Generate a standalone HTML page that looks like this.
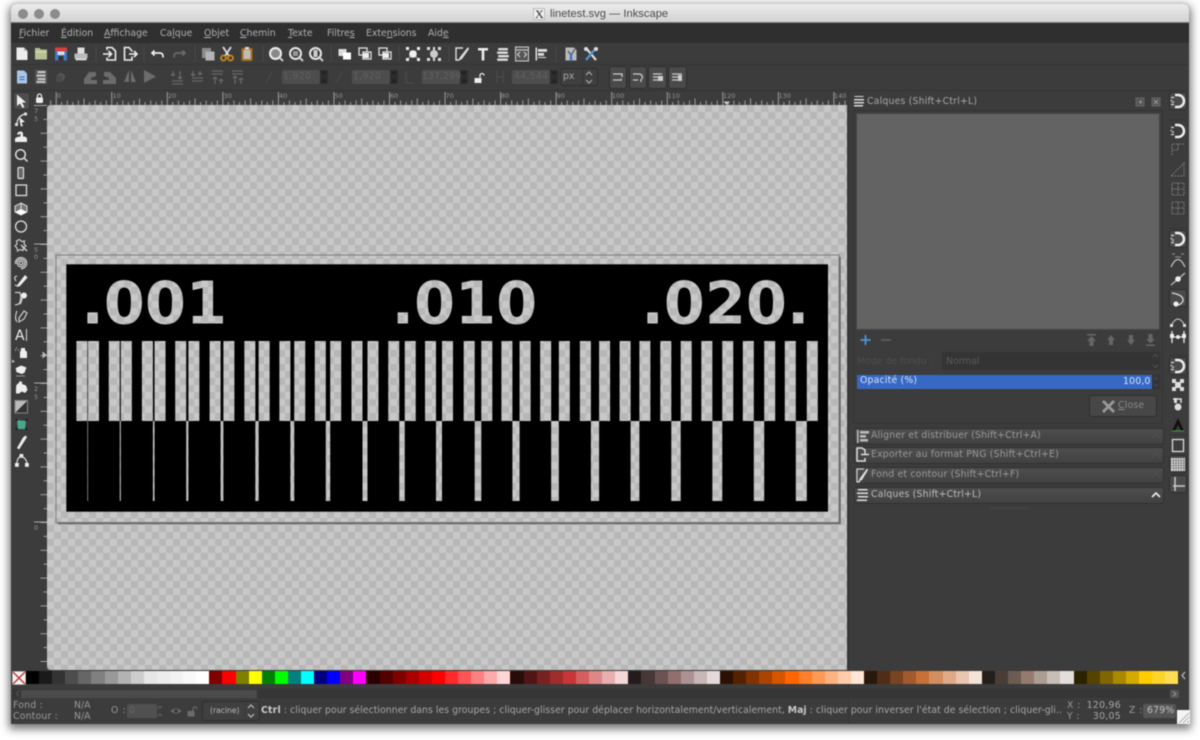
<!DOCTYPE html>
<html><head><meta charset="utf-8"><title>linetest.svg — Inkscape</title>
<style>
html,body{margin:0;padding:0;width:1200px;height:740px;overflow:hidden;background:#fff}
#r{position:relative;width:1200px;height:740px;filter:blur(.45px);font-family:"DejaVu Sans","Liberation Sans",sans-serif}
#r div,#r span.t,#r svg{position:absolute}
#win{left:11px;top:4px;width:1178px;height:720px;background:#3c3c3c;border-radius:5px 5px 0 0;box-shadow:0 3px 9px 2px rgba(0,0,0,.55)}
.t{line-height:12px;white-space:nowrap;font-size:9.3px;color:#b0b0b0}
.t u{text-underline-offset:1px}
.f{background:#525252;border-radius:2px}
.b{background:#464646;border:1px solid #2e2e2e;border-radius:3px;box-sizing:border-box}
.e{left:854px;width:310px;height:17px;background:linear-gradient(#4e4e4e,#414141);border:1px solid #303030;border-radius:3px;box-sizing:border-box}
#sw{left:26px;top:671px;width:1152px;height:13px;display:flex}
#sw i{flex:1;display:block}
</style></head><body><div id="r">
<div id="win"></div>
<div style="left:11px;top:4px;width:1178px;height:19px;background:linear-gradient(#ececec,#d2d2d2);border-bottom:1px solid #7d7d7d;border-radius:5px 5px 0 0;box-sizing:border-box"></div>
<div style="left:18px;top:9px;width:10px;height:10px;border-radius:5px;background:#8b8b8b"></div>
<div style="left:34px;top:9px;width:10px;height:10px;border-radius:5px;background:#8b8b8b"></div>
<div style="left:50px;top:9px;width:10px;height:10px;border-radius:5px;background:#8b8b8b"></div>
<div style="left:533px;top:8px;width:12px;height:12px;background:#f0f0f0;border:1px solid #bbb;box-sizing:border-box"></div>
<span class="t" style="left:535px;top:8px;font-family:'Liberation Serif',serif;font-size:12px;color:#222">X</span>
<span class="t" style="left:550px;top:8px;font-family:'Liberation Sans',sans-serif;font-size:11.2px;color:#4c4c4c">linetest.svg — Inkscape</span>
<div style="left:11px;top:23px;width:1178px;height:20px;background:#2f2f2f"></div>
<span class="t" style="left:19px;top:28px"><u>F</u>ichier</span>
<span class="t" style="left:61px;top:28px"><u>É</u>dition</span>
<span class="t" style="left:104px;top:28px"><u>A</u>ffichage</span>
<span class="t" style="left:160px;top:28px">Ca<u>l</u>que</span>
<span class="t" style="left:204px;top:28px"><u>O</u>bjet</span>
<span class="t" style="left:240px;top:28px"><u>C</u>hemin</span>
<span class="t" style="left:288px;top:28px"><u>T</u>exte</span>
<span class="t" style="left:327px;top:28px">Filtre<u>s</u></span>
<span class="t" style="left:366px;top:28px">Exte<u>n</u>sions</span>
<span class="t" style="left:428px;top:28px">Aid<u>e</u></span>
<div style="left:11px;top:64px;width:1178px;height:1px;background:#353535"></div>
<div style="left:11px;top:90px;width:1178px;height:1px;background:#333"></div>
<div style="left:33px;top:91px;width:815px;height:14px;background:#3c3c3c"></div>
<div class="f" style="left:282px;top:70px;width:38px;height:14px;background:#4d4d4d"></div>
<div style="left:320px;top:70px;width:8px;height:14px;background:#2d2d2d;border-radius:0 2px 2px 0"></div>
<div class="f" style="left:352px;top:70px;width:38px;height:14px;background:#4d4d4d"></div>
<div style="left:390px;top:70px;width:8px;height:14px;background:#2d2d2d;border-radius:0 2px 2px 0"></div>
<div class="f" style="left:422px;top:70px;width:38px;height:14px;background:#4d4d4d"></div>
<div style="left:460px;top:70px;width:8px;height:14px;background:#2d2d2d;border-radius:0 2px 2px 0"></div>
<div class="f" style="left:512px;top:70px;width:38px;height:14px;background:#4d4d4d"></div>
<div style="left:550px;top:70px;width:8px;height:14px;background:#2d2d2d;border-radius:0 2px 2px 0"></div>
<span class="t" style="left:283px;top:71px;color:#606060;letter-spacing:.3px">1,920</span>
<span class="t" style="left:353px;top:71px;color:#606060;letter-spacing:.3px">1,920</span>
<span class="t" style="left:422px;top:71px;color:#606060;letter-spacing:.1px">137,299</span>
<span class="t" style="left:514px;top:71px;color:#606060;letter-spacing:.3px">44,544</span>
<div class="b" style="left:560px;top:68px;width:38px;height:18px;background:#3f3f3f"></div>
<span class="t" style="left:563px;top:71px;color:#aaa">px</span>
<div class="b" style="left:609px;top:66px;width:18px;height:23px;background:#4a4a4a"></div>
<div class="b" style="left:629px;top:66px;width:18px;height:23px;background:#4a4a4a"></div>
<div class="b" style="left:648px;top:66px;width:19px;height:23px;background:#4a4a4a"></div>
<div class="b" style="left:668px;top:66px;width:19px;height:23px;background:#4a4a4a"></div>
<div style="left:13px;top:92px;width:17px;height:18px;background:#4d4d4d;border:1px solid #333;border-radius:3px;box-sizing:border-box"></div>
<div style="left:848px;top:91px;width:317px;height:633px;background:#3c3c3c;border-left:1px solid #333;box-sizing:border-box"></div>
<div style="left:853px;top:110px;width:310px;height:314px;border:1px solid #333;border-radius:2px;box-sizing:border-box"></div>
<div style="left:856px;top:113px;width:304px;height:217px;background:#636363;border:1px solid #444;box-sizing:border-box"></div>
<span class="t" style="left:867px;top:96px;font-size:9.3px;color:#a8a8a8;letter-spacing:.2px">Calques (Shift+Ctrl+L)</span>
<span class="t" style="left:857px;top:356px;color:#4e4e4e">Mode de fondu :</span>
<div class="f" style="left:942px;top:352px;width:218px;height:18px;background:#343434"></div>
<span class="t" style="left:946px;top:356px;color:#5a5a5a">Normal</span>
<div style="left:857px;top:375px;width:295px;height:14px;background:#3669c4"></div>
<div style="left:1152px;top:375px;width:8px;height:14px;background:#333"></div>
<span class="t" style="left:860px;top:375px;color:#d8e2f2;letter-spacing:.2px">Opacité (%)</span>
<span class="t" style="left:1123px;top:376px;color:#d8e2f2;letter-spacing:.2px">100,0</span>
<div class="b" style="left:1089px;top:395px;width:68px;height:22px;background:#474747"></div>
<span class="t" style="left:1118px;top:400px;color:#8a8a8a;letter-spacing:.2px"><u>C</u>lose</span>
<div class="e" style="top:428px"></div>
<div class="e" style="top:447px"></div>
<div class="e" style="top:467px"></div>
<div class="e" style="top:487px"></div>
<span class="t" style="left:871px;top:430px;color:#9a9a9a;letter-spacing:.2px">Aligner et distribuer (Shift+Ctrl+A)</span>
<span class="t" style="left:871px;top:449px;color:#9a9a9a;letter-spacing:.2px">Exporter au format PNG (Shift+Ctrl+E)</span>
<span class="t" style="left:871px;top:469px;color:#9a9a9a;letter-spacing:.2px">Fond et contour (Shift+Ctrl+F)</span>
<span class="t" style="left:871px;top:489px;color:#bcbcbc;letter-spacing:.2px">Calques (Shift+Ctrl+L)</span>
<div class="b" style="left:1169px;top:92px;width:18px;height:18px;background:#4a4a4a"></div>
<div class="b" style="left:1169px;top:230px;width:18px;height:18px;background:#4a4a4a"></div>
<div class="b" style="left:1169px;top:289px;width:18px;height:18px;background:#4a4a4a"></div>
<div class="b" style="left:1169px;top:357px;width:18px;height:18px;background:#4a4a4a"></div>
<div class="b" style="left:1169px;top:455px;width:18px;height:18px;background:#4a4a4a"></div>
<div class="b" style="left:1169px;top:475px;width:18px;height:18px;background:#4a4a4a"></div>

<svg style="left:0;top:0" width="1200" height="740" viewBox="0 0 1200 740">
<defs>
<pattern id="c" width="14" height="14" patternUnits="userSpaceOnUse" x="47" y="105"><rect width="14" height="14" fill="#c8c8c8"/><rect width="7" height="7" fill="#b7b7b7"/><rect x="7" y="7" width="7" height="7" fill="#b7b7b7"/></pattern>
<pattern id="hr" width="55.55" height="14" patternUnits="userSpaceOnUse" x="0.15" y="91"><path d="M.5 1V14M6 11V14M11.6 9.500V14M17.1 11V14M22.7 9.500V14M28.3 7.500V14M33.8 11V14M39.4 9.500V14M44.9 11V14M50.5 9.500V14" stroke="#a8a8a8" stroke-width=".9" fill="none"/></pattern>
<pattern id="vr" width="14" height="27.8" patternUnits="userSpaceOnUse" x="33" y="21.6"><path d="M7.500 .5H14M10.500 14.400H14" stroke="#a0a0a0" stroke-width=".9" fill="none"/></pattern>
<symbol id="m" viewBox="-8 -8 16 16" overflow="visible"><path d="M-3-6H0A6 6 0 0 1 0 6H-3" fill="none" stroke="#eee" stroke-width="2.500"/><path d="M-7-3.500H-4M-7.500-.5H-6M-4 3.500H-7M-4 1H-6" stroke="#ddd" stroke-width="1.300"/></symbol>
</defs>

<!-- canvas -->
<path d="M51 105H847V670H51Q47 670 47 666V109Q47 105 51 105Z" fill="url(#c)"/>
<rect x="56" y="255" width="783" height="267.500" fill="none" stroke="#7c7c7c" stroke-width="1"/>
<path d="M840 257V523.500H58" fill="none" stroke="#666" stroke-width="1.500"/>
<rect x="66.300" y="264.300" width="761.700" height="247.400" fill="#000"/>
<g font-family="'DejaVu Sans',sans-serif" font-weight="700" font-size="59" fill="url(#c)">
<text x="81.400" y="323.500">.001</text>
<text x="391.600" y="323.500">.010</text>
<text x="641.400" y="323.500">.020.</text>
</g>
<g fill="url(#c)">
<path d="M76.400 341h11v80h-11zM88 341h11v80h-11zM108.750 341h11v80h-11zM120.850 341h11v80h-11zM141.900 341h11v80h-11zM154.550 341h11v80h-11zM175.200 341h11v80h-11zM188.400 341h11v80h-11zM209.600 341h11v80h-11zM223.400 341h11v80h-11zM244.350 341h11v80h-11zM258.650 341h11v80h-11zM279.400 341h11v80h-11zM294.250 341h11v80h-11zM314.800 341h11v80h-11zM330.200 341h11v80h-11zM351.500 341h11v80h-11zM367.500 341h11v80h-11zM388.250 341h11v80h-11zM404.750 341h11v80h-11zM425 341h11v80h-11zM442 341h11v80h-11zM463.700 341h11v80h-11zM481.300 341h11v80h-11zM501.400 341h11v80h-11zM519.600 341h11v80h-11zM540.150 341h11v80h-11zM558.850 341h11v80h-11zM579.900 341h11v80h-11zM599.100 341h11v80h-11zM619.600 341h11v80h-11zM639.400 341h11v80h-11zM660.300 341h11v80h-11zM680.700 341h11v80h-11zM701.350 341h11v80h-11zM722.250 341h11v80h-11zM742.800 341h11v80h-11zM764.200 341h11v80h-11zM784.800 341h11v80h-11zM806.800 341h11v80h-11z"/>
<path d="M87.400 421h.6v80h-.6zM119.750 421h1.100v80h-1.100zM152.900 421h1.650v80h-1.650zM186.200 421h2.200v80h-2.200zM220.600 421h2.800v80h-2.800zM255.350 421h3.300v80h-3.300zM290.400 421h3.850v80h-3.850zM325.800 421h4.400v80h-4.400zM362.500 421h5v80h-5zM399.250 421h5.500v80h-5.500zM436 421h6v80h-6zM474.700 421h6.600v80h-6.600zM512.400 421h7.200v80h-7.200zM551.150 421h7.700v80h-7.700zM590.900 421h8.200v80h-8.200zM630.600 421h8.800v80h-8.800zM671.300 421h9.400v80h-9.400zM712.350 421h9.900v80h-9.900zM753.800 421h10.400v80h-10.400zM795.800 421h11v80h-11z"/>
</g>

<!-- rulers -->
<rect x="47" y="91" width="800" height="14" fill="url(#hr)"/>
<rect x="33" y="105" width="14" height="565" fill="url(#vr)"/>
<path d="M34 244H47M34 383H47M34 522H47M34 105.500H47" stroke="#a8a8a8" stroke-width=".9"/>
<g font-family="'DejaVu Sans',sans-serif" font-size="6.500" fill="#949494">
<text x="57" y="98">0</text><text x="112.500" y="98">10</text><text x="168" y="98">20</text><text x="223.500" y="98">30</text><text x="279" y="98">40</text><text x="334.500" y="98">50</text><text x="390" y="98">60</text><text x="445.500" y="98">70</text><text x="501" y="98">80</text><text x="556.500" y="98">90</text><text x="612" y="98">100</text><text x="667.500" y="98">110</text><text x="723" y="98">120</text><text x="778.500" y="98">130</text><text x="834" y="98">140</text>
<text x="34" y="113">7</text><text x="34" y="121">5</text><text x="34" y="252">5</text><text x="34" y="259">0</text><text x="34" y="391">2</text><text x="34" y="399">5</text><text x="34" y="530">0</text>
</g>
<path d="M723.500 101.500H730L726.700 105Z" fill="#ccc"/><path d="M42.500 351.500V358.500L47 355Z" fill="#bbb"/><path d="M12 359.500L15 361.500L12 363Z" fill="#bbb"/>

<!-- lock on ruler corner -->
<g transform="translate(39.500 98.500)"><rect x="-3.500" y="-1" width="7" height="5.500" rx="1" fill="#eee"/><path d="M-2-1V-2.500A2 2 0 0 1 2-2.500V-1" stroke="#eee" stroke-width="1.200" fill="none"/></g>

<!-- Toolbar 1 -->
<g transform="translate(22 54)"><path d="M-5.500-6.500H2L5.500-3V6H-5.500Z" fill="#eee"/><path d="M2-6.500V-3H5.500" fill="#bbb"/></g>
<g transform="translate(41 54)"><path d="M-6-6H-1.500L0-4.500H6V5.500H-6Z" fill="#b6c193"/><path d="M-6-2H6" stroke="#d5dcb8"/></g>
<g transform="translate(61 54)"><rect x="-6" y="-6.500" width="12" height="13" fill="#3e78c6"/><rect x="-6" y="-6.500" width="12" height="3.500" fill="#e23b3b"/><rect x="-3.500" y="-2.500" width="7" height="3.500" fill="#ddd"/><rect x="-2.500" y="2" width="5" height="4.500" fill="#333"/></g>
<g transform="translate(81 54)"><rect x="-3.500" y="-6.500" width="7" height="6" fill="#ddd"/><rect x="-6.500" y="-.5" width="13" height="5" fill="#bbb"/><rect x="-5.500" y="4.500" width="11" height="1.800" fill="#e0e0e0"/></g>
<g transform="translate(110 54)" fill="none" stroke="#eee" stroke-width="1.600"><path d="M-3-4V-6.500H2L5.500-3V6H-3V3.500"/><path d="M-7 0H1.500M-1.500-3L1.500 0L-1.500 3"/></g>
<g transform="translate(130 54)" fill="none" stroke="#eee" stroke-width="1.600"><path d="M2-2.500V-3L-1-6.500H-5.500V6H2V2.500"/><path d="M-1 0H7M4-3L7 0L4 3"/></g>
<g transform="translate(158 54)" fill="none" stroke="#eee" stroke-width="1.700"><path d="M-3.500-3.500L-6-1L-3.500 1.500M-6-1H2A3 3 0 0 1 5 2V3.500"/></g>
<g transform="translate(179 54)" fill="none" stroke="#6a6a6a" stroke-width="1.700"><path d="M3.500-3.500L6-1L3.500 1.500M6-1H-2A3 3 0 0 0 -5 2V3.500"/></g>
<g transform="translate(208 54)"><rect x="-6" y="-6" width="9" height="10" fill="#8c8c8c"/><rect x="-2.500" y="-2.500" width="9" height="9" fill="#b4b4b4"/></g>
<g transform="translate(227 54)"><path d="M-4-7L2 2M4-7L-2 2" stroke="#ddd" stroke-width="1.800"/><circle cx="-3.500" cy="4" r="2.500" fill="none" stroke="#c98a1e" stroke-width="1.800"/><circle cx="3.500" cy="4" r="2.500" fill="none" stroke="#c98a1e" stroke-width="1.800"/></g>
<g transform="translate(247 54)"><rect x="-5.500" y="-6" width="11" height="13" rx="1" fill="#a8701f"/><rect x="-3.500" y="-4" width="7" height="9" fill="#bdbdbd"/><rect x="-2" y="-7" width="4" height="2.500" fill="#ddd"/></g>
<g transform="translate(276 54)"><circle cx="-.5" cy="-.5" r="5.500" fill="#8a8a8a" stroke="#f0f0f0" stroke-width="2"/><path d="M3.500 3.500L7 7" stroke="#ccc" stroke-width="2"/></g>
<g transform="translate(296 54)"><circle cx="-.5" cy="-.5" r="5.500" fill="none" stroke="#e6e6e6" stroke-width="2"/><rect x="-3" y="-3" width="5" height="5" fill="#999"/><path d="M3.500 3.500L7 7" stroke="#ccc" stroke-width="2"/></g>
<g transform="translate(316 54)"><circle cx="-.5" cy="-.5" r="5.500" fill="none" stroke="#e6e6e6" stroke-width="2"/><rect x="-2.500" y="-4" width="4" height="7" fill="#ccc"/><path d="M3.500 3.500L7 7" stroke="#ccc" stroke-width="2"/></g>
<g transform="translate(345 54)"><rect x="-6.500" y="-5" width="8" height="7" fill="#ddd"/><rect x="-2" y="-1.500" width="8" height="7" fill="#fff"/></g>
<g transform="translate(365 54)" fill="none" stroke="#e0e0e0" stroke-width="1.300"><rect x="-6" y="-6" width="8" height="7"/><rect x="-2" y="-2" width="8" height="7" fill="#333"/></g><rect x="363" y="53" width="6" height="5" fill="#eee"/>
<g transform="translate(385 54)" fill="none" stroke="#e0e0e0" stroke-width="1.300"><rect x="-6" y="-6" width="8" height="7"/><rect x="-2" y="-2" width="8" height="7" fill="#333"/></g><rect x="383" y="53" width="6" height="5" fill="#eee"/>
<g transform="translate(413 54)"><path d="M-6-6L6 6M6-6L-6 6" stroke="#bbb" stroke-width="1" stroke-dasharray="2 2"/><circle r="3.800" fill="#f0f0f0"/><path d="M-7-7h3v3h-3zM4-7h3v3h-3zM-7 4h3v3h-3zM4 4h3v3h-3z" fill="#eee"/></g>
<g transform="translate(434 54)"><circle r="4" fill="#ccc"/><path d="M-7-7h3v3h-3zM4-7h3v3h-3zM-7 4h3v3h-3zM4 4h3v3h-3zM-1-7h2v3h-2zM-1 4h2v3h-2z" fill="#ddd"/></g>
<g transform="translate(462 54)" fill="none" stroke="#ddd" stroke-width="1.400"><path d="M1-6H-6V6H-3"/><path d="M6-7L-2 3L-4 7L0 5L7-5" fill="#ddd" stroke="none"/></g>
<g transform="translate(483 54)"><path d="M-5-6H5V-3.500H1.300V6.500H-1.300V-3.500H-5Z" fill="#eee"/></g>
<g transform="translate(503 54)" fill="#ddd"><rect x="-5" y="-6" width="10" height="2.400" rx="1"/><rect x="-6" y="-2.500" width="11" height="2.400" rx="1"/><rect x="-5" y="1" width="11" height="2.400" rx="1"/><rect x="-6" y="4.500" width="11" height="2.400" rx="1"/></g>
<g transform="translate(522 54)"><rect x="-6.500" y="-7" width="13" height="14" fill="#555" stroke="#ccc"/><path d="M-6-4H6" stroke="#ccc"/><path d="M-2-2L-4.500 .5L-2 3M2-2L4.500 .5L2 3" fill="none" stroke="#ddd"/></g>
<g transform="translate(541 54)" fill="#ddd"><rect x="-5.500" y="-6.500" width="1.600" height="13"/><rect x="-3" y="-5" width="9" height="2.800"/><rect x="-3" y="-1" width="6" height="2.800"/><rect x="-3" y="3" width="8" height="1"/></g>
<g transform="translate(571 54)"><path d="M-5.500-6.500H3L5.500-4V6.500H-5.500Z" fill="#bbb"/><path d="M-3-3L0 1L4-5" stroke="#567" stroke-width="1.500" fill="none"/><path d="M0 1V7" stroke="#3c78c8" stroke-width="2.500"/></g>
<g transform="translate(591 54)"><path d="M-5-6L5 6" stroke="#ddd" stroke-width="2.200"/><path d="M5-6L-5 6" stroke="#4f93d6" stroke-width="2.200"/><circle cx="5" cy="-5" r="2" fill="#ddd"/><circle cx="-5" cy="-5" r="2" fill="#ddd"/></g>
<path d="M96 46V62M144 46V62M195 46V62M263 46V62M331 46V62M399 46V62M449 46V62M556 46V62" stroke="#4a4a4a"/>

<!-- Toolbar 2 -->
<g transform="translate(22 77)"><path d="M-5-6.500H2L5-3.500V6.500H-5Z" fill="#a9c5e8"/><path d="M-2.500 0H2.500M-2.500 2.500H2.500" stroke="#3a6bb0"/></g>
<g transform="translate(41 77)" fill="#c4c4c4"><rect x="-6" y="-7" width="12" height="14" fill="#555"/><rect x="-3.500" y="-6" width="8" height="2.200"/><rect x="-4.500" y="-2.500" width="9" height="2.200"/><rect x="-3.500" y="1" width="8" height="2.200"/><rect x="-4.500" y="4" width="9" height="2"/></g>
<g transform="translate(61 77)"><circle r="4" fill="#555"/><rect x="-5" y="-1" width="6" height="6" fill="#4a4a4a"/></g>
<g fill="#6c6c6c"><path d="M84 84V79L89 72H96V76L91 78V80H97V84Z"/><path d="M104 72H110L116 78V84H103V80H109V78L104 76Z"/><path d="M129 70L124 82H129ZM131 70V82H136Z"/><path d="M144 70L156 76.500L144 83Z"/></g>
<g stroke="#666" stroke-width="1.300" fill="none"><path d="M173 71V76M173 76L171 74M173 76L175 74M180 71V79M180 79L178 77M180 79L182 77M172 81H183M172 84H183"/><path d="M193 71V76M193 76L191 74M193 76L195 74M200 71V75M200 75L198 73M200 75L202 73M192 78H203M192 81H203"/><path d="M212 71H223M212 74H223M215 84V77M215 77L213 79M215 77L217 79M221 84V79M221 79L219 81M221 79L223 81"/><path d="M232 71H243M232 74H243M235 84V76M235 76L233 78M235 76L237 78M241 84V78M241 78L239 80M241 78L243 80"/></g>
<path d="M266 83L272 72M336 83L342 72M406 71V83H414M497 71V83M503 71V83M497 77H503" stroke="#4a4a4a" stroke-width="1.200" fill="none"/>
<g fill="#222"><path d="M321 71.500h6l-3 4zM321 82.500h6l-3-4zM391 71.500h6l-3 4zM391 82.500h6l-3-4zM461 71.500h6l-3 4zM461 82.500h6l-3-4zM551 71.500h6l-3 4zM551 82.500h6l-3-4z"/></g>
<g transform="translate(479 78)"><rect x="-4.500" y="0" width="7" height="5" fill="#eee"/><path d="M1-.5V-2.500A2 2 0 0 1 5-2.500" stroke="#eee" stroke-width="1.300" fill="none"/></g>
<path d="M586 75L589 72L592 75M586 80L589 83L592 80" fill="none" stroke="#aaa" stroke-width="1.200"/><path d="M583 69V85" stroke="#353535"/>
<g stroke="#ccc" fill="none" stroke-width="1.300"><path d="M613 74H622V77M613 80H620M621 78.500V81"/><path d="M633 74H640Q643 75 642 79M633 80H638M641 79V82"/><path d="M653 74H662M653 77H658M653 80H660"/><path d="M672 74H682M672 77H682M672 80H678"/></g>
<g fill="#ccc"><rect x="658" y="76" width="5" height="5"/><rect x="678" y="75" width="4" height="6"/></g>

<!-- Left tools -->
<path d="M17 94.500V106L20 103.500L22.500 108L24.500 107L22 102.500H26Z" fill="#eee"/>
<g fill="none" stroke="#ddd" stroke-width="1.300"><path d="M17 125Q17 116 25 114"/></g><path d="M19.500 117L25 122L21.500 122.500L23 126L21 126.500L20 123Z" fill="#eee"/><path d="M15 123h3v3h-3zM24 112.500h3v3h-3z" fill="#ddd"/>
<path d="M15 142H27V139Q27 136.500 23 136.500V134Q23 131.500 20.500 131.500Q18 131.500 17 134L19 135Q19.500 133.500 20.500 133.500V136.500Q15 137 15 139Z" fill="#eee"/>
<g fill="none" stroke="#ddd" stroke-width="1.500"><circle cx="20.500" cy="154.500" r="4.800"/><path d="M24 158L27.500 161.500"/></g>
<rect x="18" y="167.500" width="5.500" height="11" rx="1" fill="#666" stroke="#ddd" stroke-width="1.200"/>
<rect x="16" y="185" width="10.500" height="10.500" fill="none" stroke="#ddd" stroke-width="1.300"/>
<g><path d="M21 203L27 206V212L21 215L15 212V206Z" fill="#777" stroke="#ddd"/><path d="M15 212L21 215L27 212L21 209Z" fill="#fff"/><path d="M21 203V209" stroke="#ddd"/></g>
<circle cx="21" cy="226.500" r="5.500" fill="none" stroke="#ddd" stroke-width="1.300"/>
<g fill="none" stroke="#ccc" stroke-width="1.200"><path d="M19.500 239.500L21.500 241.500L24.500 241L24 244L26 246L23.500 247.500L23 250.500L20 249.500L17.500 251L17 248L15 246L17 244L16.500 241Z"/></g><path d="M21 245L27 251" stroke="#ddd" stroke-width="1.300"/>
<g fill="none" stroke="#ccc" stroke-width="1.300"><circle cx="21" cy="263" r="1.800"/><circle cx="21" cy="263" r="3.800"/><path d="M15.500 264A5.600 5.600 0 1 1 21 268.700"/></g>
<g><path d="M16 281Q13 277 17 276M15 285L18 286" fill="none" stroke="#ccc" stroke-width="1.200"/><path d="M18 284L25 275L27.500 277.500L20 286L17 287Z" fill="#eee"/></g>
<g fill="none" stroke="#ccc" stroke-width="1.200"><path d="M15 292.500H20Q22 298 19 304L15 305"/></g><circle cx="24" cy="295.500" r="3" fill="#eee"/><path d="M22 298L20 304" stroke="#ccc" stroke-width="2"/>
<g fill="none" stroke="#ccc" stroke-width="1.200"><path d="M17 311Q14 318 17 322"/><path d="M19 318L24 311L27 313L24 319L19 322Z"/></g>
<text x="15" y="340" font-family="'DejaVu Sans',sans-serif" font-size="14" fill="#eee">A</text><path d="M26.500 329V341" stroke="#ccc" stroke-width="1.100"/>
<g><path d="M21 348H25V350L27 352V358H20V352L21 350Z" fill="#eee"/><path d="M16 348h1M18 350h1M15 350h1" stroke="#bbb" stroke-width="1.200"/></g>
<path d="M17 366L23 366L27 370L23 374H20L16 370Z" fill="#eee" transform="rotate(-25 21 370)"/><path d="M16 376H25" stroke="#999"/>
<path d="M16 388Q16 384 19 383V381.500H22V384L26 385.500L27.500 390L25 393L22 391.500L19 393.500H16Z" fill="#eee"/>
<rect x="15" y="400.500" width="12.500" height="12.500" fill="#bbb" stroke="#888"/><path d="M15.500 412.500L27 401V412.500Z" fill="#333"/>
<path d="M17 420L26 421L25 429L18 429Z" fill="#46a98c"/><path d="M15.500 419h2v2h-2zM25.500 419h2v2h-2zM15.500 428h2v2h-2zM25.500 428h2v2h-2z" fill="#1c1c1c"/>
<path d="M17 448L23 437.500L25.500 435.500L27 437L25.500 439.500L19 449.500Z" fill="#eee"/>
<g fill="#eee"><rect x="15" y="463" width="3.800" height="3.800"/><rect x="25" y="463" width="3.800" height="3.800"/><rect x="19.500" y="454" width="3.800" height="3.800"/></g><path d="M21 456Q17 458 17 463M21 456Q26 458 27 463" fill="none" stroke="#ddd" stroke-width="1.200"/>

<!-- Dock icons -->
<g transform="translate(859 101)" fill="#ddd"><path d="M-5-5H4L5-4H-4ZM-5-2H5V-.5H-5ZM-5 1H5V2.500H-5ZM-5 4H4V5.500H-5Z"/></g>
<rect x="1136" y="98" width="8" height="8" fill="#555" stroke="#666"/><path d="M1141.500 100V104L1138.500 102Z" fill="#999"/>
<rect x="1152" y="98" width="8" height="8" fill="#555" stroke="#666"/><path d="M1154 100L1158 104M1158 100L1154 104" stroke="#999"/>
<path d="M865.500 335V345M860.500 340H870.500" stroke="#4d94e0" stroke-width="1.800"/><path d="M881 340H891" stroke="#5e5e5e" stroke-width="1.800"/>
<g fill="#666"><path d="M1087 334H1096V335.500H1087ZM1091.500 336L1096 341H1093.500V346H1089.500V341H1087Z"/><path d="M1111 335L1115 340H1113V345H1109V340H1107Z"/><path d="M1131 345L1135 340H1133V335H1129V340H1127Z"/><path d="M1146 346H1155V344.500H1146ZM1150.500 343.500L1155 339H1152.500V334H1148.500V339H1146Z"/></g>
<path d="M1153 357L1155.500 354.500L1158 357M1153 365L1155.500 367.500L1158 365" fill="none" stroke="#555"/>
<path d="M1154 380L1156 377.500L1158 380M1154 384L1156 386.500L1158 384" fill="none" stroke="#4e4e4e"/>
<path d="M1103 401L1114 412M1114 401L1103 412" stroke="#999" stroke-width="2.800"/>
<g fill="#bbb"><rect x="857" y="430" width="1.600" height="13"/><rect x="860" y="431" width="9" height="2.600"/><rect x="860" y="435" width="6" height="2.600"/><rect x="860" y="439" width="8" height="2.600"/></g>
<path d="M865 455V450L862 448H857V461H865V458M861 454.500H869" fill="none" stroke="#ddd" stroke-width="1.500"/>
<path d="M864 469H857V482H860" fill="none" stroke="#ccc" stroke-width="1.300"/><path d="M867 468.500L860 478L858 482L862 480L868 470Z" fill="#ddd"/>
<g fill="#ddd"><path d="M858 489H867L868 490.500H858ZM857 492.500H868V494H857ZM858 496H868V497.500H858ZM857 499.500H867V501H857Z"/></g>
<path d="M1152 438L1156 434.500L1160 438M1152 457L1156 453.500L1160 457M1152 477L1156 473.500L1160 477" fill="none" stroke="#4e4e4e" stroke-width="1.500"/>
<path d="M1152 497L1156 493L1160 497" fill="none" stroke="#eee" stroke-width="1.600"/>
<path d="M990 508H1027" stroke="#4a4a4a" stroke-width="2" stroke-dasharray="1 1"/>

<!-- Right toolbar -->
<use href="#m" x="1170" y="93" width="16" height="16"/>
<use href="#m" x="1170" y="123" width="16" height="16"/>
<use href="#m" x="1170" y="231" width="16" height="16"/>
<use href="#m" x="1170" y="358" width="16" height="16"/>
<g fill="none" stroke="#777" stroke-width="1.100" stroke-dasharray="2 1"><path d="M1172 155V144H1184M1178 144V150H1172"/><path d="M1171 176L1184 163V176Z"/><rect x="1172" y="183" width="12" height="12"/><path d="M1178 183V195M1172 189H1184"/><rect x="1172" y="202" width="12" height="12"/><path d="M1178 202V214M1172 208H1184"/></g>
<g fill="none" stroke="#bbb" stroke-width="1.300"><path d="M1171 267Q1178 252 1185 267"/><path d="M1171 285L1185 273"/><path d="M1171 326Q1178 312 1185 326"/></g>
<path d="M1172 254h3M1181 254h3M1175 257h6" stroke="#888" stroke-width="1.200"/>
<circle cx="1178" cy="279" r="2.800" fill="#eee"/>
<path d="M1172 293Q1184 295 1183 301Q1181 305 1177 305" fill="none" stroke="#ddd" stroke-width="1.300"/><circle cx="1176" cy="304" r="2.600" fill="#eee"/>
<rect x="1170" y="324" width="3" height="3" fill="#ddd"/><rect x="1183" y="324" width="3" height="3" fill="#ddd"/>
<g fill="#eee"><path d="M1172 331V343M1184 331V343" stroke="#eee" stroke-width="1.300"/><path d="M1172 337H1184" stroke="#eee" stroke-width="1"/><circle cx="1178" cy="337" r="2"/><rect x="1170" y="334" width="4" height="4"/><rect x="1182" y="334" width="4" height="4"/></g>
<g fill="#ddd"><rect x="1172" y="379" width="4" height="4"/><rect x="1180" y="379" width="4" height="4"/><rect x="1172" y="387" width="4" height="4"/><rect x="1180" y="387" width="4" height="4"/><rect x="1175" y="382" width="6" height="6"/></g>
<path d="M1173 399H1181V403" fill="none" stroke="#ddd" stroke-width="1.500"/><g fill="#ddd"><circle cx="1178" cy="407" r="3.500"/><rect x="1174" y="398" width="3" height="5"/></g>
<path d="M1172 431L1178 418L1184 431H1181L1178 425L1175 431Z" fill="#111"/><path d="M1172 431L1184 431" stroke="#2f9a3f" stroke-width="1.200"/>
<rect x="1172.500" y="439.500" width="11" height="12" fill="none" stroke="#ddd" stroke-width="1.300"/>
<g><rect x="1171" y="458" width="14" height="13" fill="#ddd"/><path d="M1173.500 458V471M1176 458V471M1178.500 458V471M1181 458V471M1183.500 458V471M1171 460.500H1185M1171 463H1185M1171 465.500H1185M1171 468H1185" stroke="#555" stroke-width=".6"/></g>
<path d="M1173 486H1185M1175 477V491" stroke="#ccc" stroke-width="1.500" fill="none"/>
<path d="M1169 228H1187M1169 355H1187M1169 435H1187M1169 120H1187" stroke="#353535"/>

<!-- None swatch -->
<rect x="12" y="671" width="14" height="14" fill="#f2f2f2" stroke="#333" stroke-width=".7"/>
<path d="M13 672L25 684M25 672L13 684" stroke="#b84040" stroke-width="1.500"/>
<path d="M1185 672L1182 675.500L1185 679" fill="none" stroke="#bbb" stroke-width="1.300"/>

<!-- Status -->
<g transform="translate(176 711)"><path d="M-5.500 0Q0-5 5.500 0Q0 5-5.500 0Z" fill="#6b6b6b"/><circle r="1.800" fill="#333"/></g>
<g transform="translate(192 712)" fill="#6b6b6b"><rect x="-4.500" y="-1" width="7" height="5.500"/><path d="M1-1V-3A2 2 0 0 1 5-3" fill="none" stroke="#6b6b6b" stroke-width="1.200"/></g>
<path d="M157 706h6l-3 3zM157 716h6l-3-3z" fill="#555"/>
</svg>

<div id="sw"><i style="background:#000"></i><i style="background:#1a1a1a"></i><i style="background:#333"></i><i style="background:#4d4d4d"></i><i style="background:#666"></i><i style="background:#808080"></i><i style="background:#999"></i><i style="background:#b3b3b3"></i><i style="background:#ccc"></i><i style="background:#e6e6e6"></i><i style="background:#ececec"></i><i style="background:#f2f2f2"></i><i style="background:#f9f9f9"></i><i style="background:#fff"></i><i style="background:#800000"></i><i style="background:#f00"></i><i style="background:#808000"></i><i style="background:#ff0"></i><i style="background:#008000"></i><i style="background:#0f0"></i><i style="background:#008080"></i><i style="background:#0ff"></i><i style="background:#000080"></i><i style="background:#00f"></i><i style="background:#800080"></i><i style="background:#f0f"></i><i style="background:#2b0000"></i><i style="background:#500"></i><i style="background:#800000"></i><i style="background:#a00"></i><i style="background:#d40000"></i><i style="background:#f00"></i><i style="background:#ff2a2a"></i><i style="background:#f55"></i><i style="background:#ff8080"></i><i style="background:#faa"></i><i style="background:#ffd5d5"></i><i style="background:#280b0b"></i><i style="background:#501616"></i><i style="background:#782121"></i><i style="background:#a02c2c"></i><i style="background:#c83737"></i><i style="background:#d35f5f"></i><i style="background:#de8787"></i><i style="background:#e9afaf"></i><i style="background:#f4d7d7"></i><i style="background:#241c1c"></i><i style="background:#483737"></i><i style="background:#6c5353"></i><i style="background:#916f6f"></i><i style="background:#ac9393"></i><i style="background:#c8b7b7"></i><i style="background:#e3dbdb"></i><i style="background:#2b1100"></i><i style="background:#520"></i><i style="background:#803300"></i><i style="background:#a40"></i><i style="background:#d45500"></i><i style="background:#f60"></i><i style="background:#ff7f2a"></i><i style="background:#f95"></i><i style="background:#ffb380"></i><i style="background:#fca"></i><i style="background:#ffe6d5"></i><i style="background:#28170b"></i><i style="background:#502d16"></i><i style="background:#784421"></i><i style="background:#a05a2c"></i><i style="background:#c87137"></i><i style="background:#d38d5f"></i><i style="background:#deaa87"></i><i style="background:#e9c6af"></i><i style="background:#f4e3d7"></i><i style="background:#241f1c"></i><i style="background:#483e37"></i><i style="background:#6c5d53"></i><i style="background:#917c6f"></i><i style="background:#ac9d93"></i><i style="background:#c8beb7"></i><i style="background:#e3dedb"></i><i style="background:#2b2200"></i><i style="background:#540"></i><i style="background:#806600"></i><i style="background:#a80"></i><i style="background:#d4aa00"></i><i style="background:#fc0"></i><i style="background:#ffd42a"></i><i style="background:#fd5"></i></div>

<div style="left:12px;top:689px;width:1160px;height:9px;background:#363636"></div>
<div style="left:21px;top:690px;width:236px;height:8px;background:#4b4b4b"></div>
<svg style="left:0;top:685px" width="1200" height="40"><path d="M19 5.500L16.500 8.500L19 11.500" fill="none" stroke="#555"/><rect x="1170" y="5" width="9" height="8" rx="1" fill="#555"/><path d="M1173 6.500L1176 9L1173 11.500" fill="none" stroke="#999"/></svg>
<span class="t" style="left:13px;top:700px;color:#9a9a9a;letter-spacing:.2px">Fond :</span>
<span class="t" style="left:13px;top:711px;color:#9a9a9a;letter-spacing:.2px">Contour :</span>
<span class="t" style="left:74px;top:700px;color:#9a9a9a">N/A</span>
<span class="t" style="left:74px;top:711px;color:#9a9a9a">N/A</span>
<span class="t" style="left:111px;top:705px;color:#9a9a9a;letter-spacing:.6px">O :</span>
<div class="f" style="left:127px;top:704px;width:30px;height:14px;background:#505050"></div>
<span class="t" style="left:129px;top:705px;color:#666">0</span>
<div class="b" style="left:202px;top:701px;width:58px;height:20px;background:#404040"></div>
<svg style="left:240px;top:700px" width="20" height="22"><path d="M8 8L11 5L14 8M8 14L11 17L14 14" fill="none" stroke="#bbb" stroke-width="1.200"/><path d="M5 3V19" stroke="#363636"/></svg>
<span class="t" style="left:210px;top:705px;font-size:7.6px;color:#bbb">(racine)</span>
<span class="t" style="left:261px;top:705px;width:801px;overflow:hidden;color:#a6a6a6;font-size:9.3px;letter-spacing:.05px"><b style="color:#ccc;letter-spacing:.2px">Ctrl</b> : cliquer pour sélectionner dans les groupes ; cliquer-glisser pour déplacer horizontalement/verticalement, <b style="color:#ccc">Maj</b> : cliquer pour inverser l'état de sélection ; cliquer-gli...</span>
<span class="t" style="left:1067px;top:700px;color:#9a9a9a;letter-spacing:.4px">X :</span>
<span class="t" style="left:1067px;top:711px;color:#9a9a9a;letter-spacing:.4px">Y :</span>
<span class="t" style="left:1086px;top:700px;width:35px;text-align:right;color:#a6a6a6;letter-spacing:.3px">120,96</span>
<span class="t" style="left:1086px;top:711px;width:35px;text-align:right;color:#a6a6a6;letter-spacing:.3px">30,05</span>
<span class="t" style="left:1129px;top:705px;color:#9a9a9a;letter-spacing:.4px">Z :</span>
<div class="f" style="left:1143px;top:704px;width:33px;height:14px;background:#565656"></div>
<span class="t" style="left:1147px;top:705px;color:#c0c0c0;letter-spacing:.2px">679%</span>
<svg style="left:1177px;top:710px" width="13" height="14"><rect width="13" height="14" fill="#f4f4f4"/><path d="M2 13L12 3M6 13L12 7M10 13L12 11" stroke="#999" stroke-width=".8"/></svg>
</div></body></html>
